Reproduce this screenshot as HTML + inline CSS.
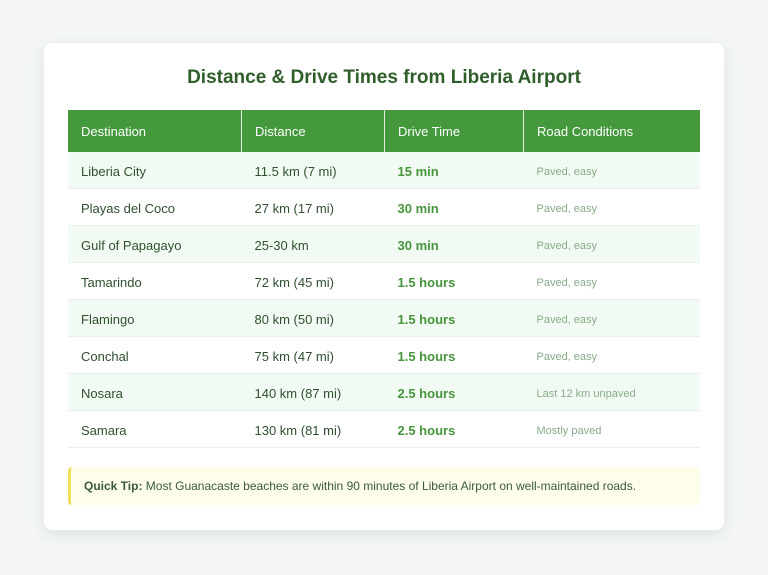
<!DOCTYPE html>
<html><head><style>
body{margin:0;width:768px;height:575px;background:#f3f6f4;font-family:"Liberation Sans",sans-serif;overflow:hidden}
.card{position:absolute;left:44px;top:43px;width:680px;height:487px;background:#fff;border-radius:8px;box-shadow:0 4px 14px rgba(60,100,70,.12)}
h1{position:absolute;left:0;right:0;top:67px;margin:0;text-align:center;font-size:19px;color:#2f5e2b;font-weight:bold}
table{position:absolute;left:68px;top:110px;width:632px;border-collapse:collapse}
th{background:#43993b;color:#fff;font-weight:normal;text-align:left;height:42px;padding:0 13px;font-size:13px;border-right:1px solid #dfeedd}
th:last-child{border-right:none}
td{height:36px;padding:0 13px;font-size:13px;line-height:16px;color:#2f4f2f;border-bottom:1px solid #e8f0ea;vertical-align:middle}
td span{position:relative;top:2px}
tr:nth-child(even) td{background:#f2fbf3}
td.t{color:#46953c;font-weight:bold}
td.r{color:#88aa88;font-size:11px}
.tip{position:absolute;left:68px;top:467px;height:38px;background:#fdfde9;border-left:3px solid #f2e05a;border-radius:4px;font-size:12px;color:#3a5a3a;line-height:38px;padding-left:13px;box-sizing:border-box;width:632px}
</style></head><body>
<div class="card"></div>
<h1>Distance &amp; Drive Times from Liberia Airport</h1>
<table>
<tr><th style="width:147px">Destination</th><th style="width:116px">Distance</th><th style="width:112px">Drive Time</th><th>Road Conditions</th></tr>
<tr><td><span>Liberia City</span></td><td><span>11.5 km (7 mi)</span></td><td class="t"><span>15 min</span></td><td class="r"><span>Paved, easy</span></td></tr>
<tr><td><span>Playas del Coco</span></td><td><span>27 km (17 mi)</span></td><td class="t"><span>30 min</span></td><td class="r"><span>Paved, easy</span></td></tr>
<tr><td><span>Gulf of Papagayo</span></td><td><span>25-30 km</span></td><td class="t"><span>30 min</span></td><td class="r"><span>Paved, easy</span></td></tr>
<tr><td><span>Tamarindo</span></td><td><span>72 km (45 mi)</span></td><td class="t"><span>1.5 hours</span></td><td class="r"><span>Paved, easy</span></td></tr>
<tr><td><span>Flamingo</span></td><td><span>80 km (50 mi)</span></td><td class="t"><span>1.5 hours</span></td><td class="r"><span>Paved, easy</span></td></tr>
<tr><td><span>Conchal</span></td><td><span>75 km (47 mi)</span></td><td class="t"><span>1.5 hours</span></td><td class="r"><span>Paved, easy</span></td></tr>
<tr><td><span>Nosara</span></td><td><span>140 km (87 mi)</span></td><td class="t"><span>2.5 hours</span></td><td class="r"><span>Last 12 km unpaved</span></td></tr>
<tr><td><span>Samara</span></td><td><span>130 km (81 mi)</span></td><td class="t"><span>2.5 hours</span></td><td class="r"><span>Mostly paved</span></td></tr>
</table>
<div class="tip"><b>Quick Tip:</b> Most Guanacaste beaches are within 90 minutes of Liberia Airport on well-maintained roads.</div>
</body></html>
